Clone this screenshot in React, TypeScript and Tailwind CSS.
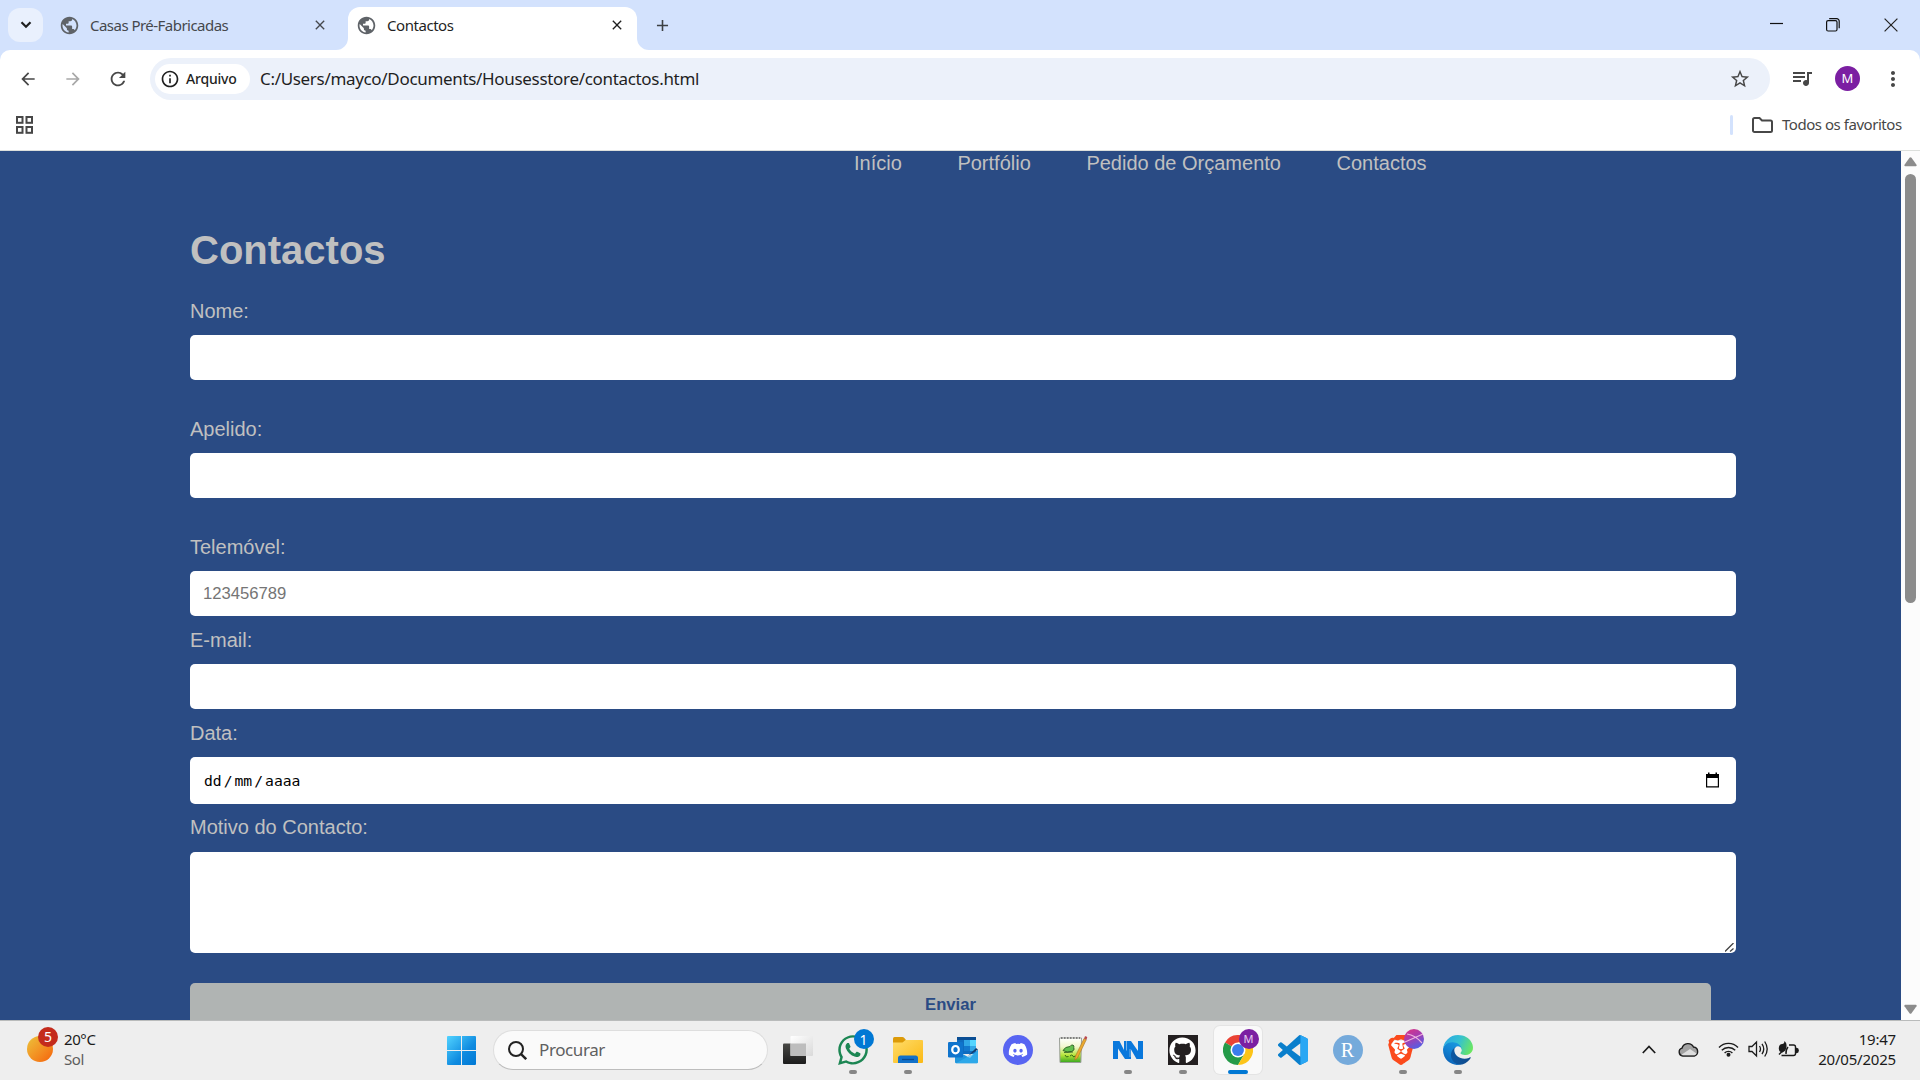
import React from "react";
import {
  MdPublic,
  MdClose,
  MdAdd,
  MdArrowBack,
  MdArrowForward,
  MdRefresh,
  MdOutlineInfo,
  MdStarBorder,
  MdQueueMusic,
  MdMoreVert,
} from "react-icons/md";
import { FaWhatsapp, FaDiscord, FaGithub } from "react-icons/fa";
import { SiBrave } from "react-icons/si";

const UI = "font-['Noto_Sans',sans-serif]";

function TabStrip() {
  return (
    <div className="flex h-[50px] items-start bg-[#d3e2fd]">
      <div className="ml-2 mt-2 flex h-[34px] w-[35px] items-center justify-center rounded-xl bg-[#e9f0fd]">
        <svg width="12" height="8" viewBox="0 0 12 8" fill="none" stroke="#1f1f1f" strokeWidth="2.200">
          <path d="M1.500 1.200 6 5.700l4.500-4.500" />
        </svg>
      </div>
      <div className="ml-[16px] flex h-[50px] w-[289px] items-center text-[#45484d]">
        <MdPublic className="size-[21px] text-[#5f6368]" />
        <span className="ml-[10px] w-[222px] whitespace-nowrap text-[15px] tracking-[-0.53px]">Casas Pré-Fabricadas</span>
        <MdClose className="size-4" />
      </div>
      <div className="relative mt-[7px] flex h-[43px] w-[289px] items-center rounded-t-xl bg-white pb-[7px] text-[#1f1f1f]">
        <svg className="absolute -left-3 bottom-0" width="12" height="12" viewBox="0 0 12 12">
          <path d="M12 0v12H0A12 12 0 0 0 12 0z" fill="#fff" />
        </svg>
        <svg className="absolute -right-3 bottom-0" width="12" height="12" viewBox="0 0 12 12">
          <path d="M0 0v12h12A12 12 0 0 1 0 0z" fill="#fff" />
        </svg>
        <MdPublic className="ml-2 size-[21px] text-[#5f6368]" />
        <span className="ml-[10px] w-[222px] text-[15px] tracking-[-0.45px]">Contactos</span>
        <MdClose className="size-4" />
      </div>
      <MdAdd className="ml-[16px] mt-[16px] size-[19px] text-[#3c4043]" />
      <div className="ml-auto flex h-[50px] items-center pr-[22px]">
        <svg width="13" height="14" viewBox="0 0 13 14"><path d="M0 5.500h13" stroke="#111" strokeWidth="1.200" /></svg>
        <svg className="ml-[43px]" width="14" height="14" viewBox="0 0 14 14" fill="none" stroke="#111" strokeWidth="1.200">
          <rect x=".6" y="2.600" width="10.400" height="10.400" rx="1.500" />
          <path d="M3.200.6h7.300a2.600 2.600 0 0 1 2.700 2.700v7" />
        </svg>
        <svg className="ml-[44px]" width="14" height="14" viewBox="0 0 14 14" stroke="#222" strokeWidth="1.200"><path d="m.6.6 12.800 12.800M13.400.6.6 13.400" /></svg>
      </div>
    </div>
  );
}

function Toolbar() {
  return (
    <div className="bg-[#d3e2fd]">
      <div className="flex h-[50px] items-center rounded-t-[10px] bg-white pt-2 text-[#474747]">
        <MdArrowBack className="mb-px ml-[18px] size-5" />
        <MdArrowForward className="mb-px ml-[25px] size-5 text-[#a8a8a8]" />
        <MdRefresh className="mb-px ml-[24px] size-[22px]" />
        <div className="ml-[21px] flex h-[42px] w-[1620px] items-center rounded-full bg-[#ecf1fa]">
          <div className="ml-[5px] flex h-[30px] w-[95px] items-center rounded-full bg-white text-[#1f1f1f]">
            <MdOutlineInfo className="ml-[5px] size-[20px]" />
            <span className="mb-px ml-[6px] text-[14px] font-medium tracking-[-0.2px]">Arquivo</span>
          </div>
          <span className="ml-[10px] whitespace-nowrap text-[17px] tracking-[-0.32px] text-[#1f1f1f]">
            C:/Users/mayco/Documents/Housesstore/contactos.html
          </span>
          <MdStarBorder className="ml-auto mr-[19px] size-[22px]" />
        </div>
        <MdQueueMusic className="mb-[3px] ml-[20px] size-[24px]" />
        <div className="mb-px ml-[21px] flex size-[25px] items-center justify-center rounded-full bg-[#7b1fa2] text-[13px] text-white">M</div>
        <MdMoreVert className="ml-[21px] size-[24px]" />
      </div>
    </div>
  );
}

function BookmarksBar() {
  return (
    <div className="flex h-[51px] items-center border-b border-[#dcdfdc] bg-white text-[#474747]">
      <svg className="ml-[15px]" width="19" height="18" viewBox="0 0 19 18" fill="none" stroke="#474747" strokeWidth="2">
        <rect x="2" y="1" width="5.500" height="5.800" />
        <rect x="11.500" y="1" width="5.500" height="5.800" />
        <rect x="2" y="11" width="5.500" height="5.800" />
        <rect x="11.500" y="11" width="5.500" height="5.800" />
      </svg>
      <div className="ml-auto h-5 w-[3px] rounded-full bg-[#d3e2fd]" />
      <svg className="ml-[19px]" width="21" height="16" viewBox="0 0 21 16" fill="none" stroke="#474747" strokeWidth="2">
        <path d="M1 2.500C1 1.600 1.600 1 2.500 1h5l2.500 2.500h8.500c.9 0 1.500.6 1.500 1.500v8.500c0 .9-.6 1.500-1.500 1.500h-16C1.600 15 1 14.400 1 13.500z" />
      </svg>
      <span className="mb-[2px] ml-[9px] mr-[18px] w-[120px] whitespace-nowrap text-[15px] tracking-[-0.46px]">Todos os favoritos</span>
    </div>
  );
}

function Field({ label, tall, children }: { label: string; tall?: boolean; children?: React.ReactNode }) {
  return (
    <div>
      <div className="h-6 text-[20px] leading-6">{label}</div>
      <div className={`mt-3 flex w-[1546px] items-center rounded-[5px] bg-white px-[13px] ${tall ? "h-[47px]" : "h-[45px]"}`}>
        {children}
      </div>
    </div>
  );
}

function Page() {
  return (
    <div className="flex h-[869px] overflow-hidden bg-[#2a4b84]">
      <main className="w-[1901px] font-['Liberation_Sans',Arial,sans-serif] text-[#c0c0c0]">
        <nav className="flex h-6 gap-[55.6px] whitespace-nowrap pl-[854px] text-[20px] leading-6">
          <a>Início</a>
          <a>Portfólio</a>
          <a>Pedido de Orçamento</a>
          <a>Contactos</a>
        </nav>
        <div className="ml-[190px] mt-[52px]">
          <h1 className="h-[46px] text-[40px] font-bold leading-[46px]">Contactos</h1>
          <div className="mt-[26px]">
            <Field label="Nome:" />
          </div>
          <div className="mt-[37px]">
            <Field label="Apelido:" />
          </div>
          <div className="mt-[37px] flex flex-col gap-3">
            <Field label="Telemóvel:">
              <span className="text-[16.67px] text-[#757575]">123456789</span>
            </Field>
            <Field label="E-mail:" />
            <Field label="Data:" tall>
              <span className="ml-px mt-[2px] flex gap-[2px] font-['DejaVu_Sans_Mono',monospace] text-[14.7px] text-black">
                <span>dd</span>
                <span>/</span>
                <span>mm</span>
                <span>/</span>
                <span>aaaa</span>
              </span>
              <svg className="mb-px ml-auto mr-[3px]" width="15" height="16" viewBox="0 0 15 16">
                <path d="M1 2h2V.5h1.500V2h6V.5H12V2h2v13.500H1zm1.200 4v8.300h10.600V6z" fill="#000" fillRule="evenodd" />
              </svg>
            </Field>
            <div>
              <div className="-mt-px h-6 text-[20px] leading-6">Motivo do Contacto:</div>
              <div className="mt-[13px] flex h-[101px] w-[1546px] items-end justify-end rounded-[5px] bg-white pb-px pr-[2px]">
                <svg width="9" height="9" viewBox="0 0 9 9" stroke="#444" strokeWidth="1.300">
                  <path d="M0 8.500 8.500 0M5 8.500 8.500 5.500" />
                </svg>
              </div>
            </div>
          </div>
          <div className="mt-[30px] h-[60px] w-[1521px] rounded-[5px] bg-[#b0b4b3] text-center text-[16.67px] font-bold leading-[43px] text-[#2a4b84]">
            Enviar
          </div>
        </div>
      </main>
      <div className="flex w-[19px] flex-col items-center bg-[#fcfcfc] py-[6px]">
        <svg width="13" height="10" viewBox="0 0 13 10"><path d="M5.500.8q1-1.200 2 0l5 7q.6 1.500-.8 1.500H1.300Q0 9.300.5 7.800z" fill="#8b8b8b" /></svg>
        <div className="mt-[7px] h-[429px] w-[11px] rounded-full bg-[#8b8b8b]" />
        <svg className="mt-auto" width="13" height="10" viewBox="0 0 13 10"><path d="M5.500 9.200q1 1.200 2 0l5-7Q13.100.7 11.700.7H1.300Q0 .7.500 2.200z" fill="#8b8b8b" /></svg>
      </div>
    </div>
  );
}

function TaskbarItem({ children, state }: { children: React.ReactNode; state?: "open" | "active" }) {
  return (
    <div
      className={`relative mx-[3.5px] flex size-12 items-center justify-center rounded-md ${
        state === "active" ? "bg-[#f9f9f9] shadow-[0_0_0_1px_#e4e4e4]" : ""
      }`}
    >
      <div className="relative flex size-[30px] items-center justify-center">{children}</div>
      {state === "open" && <div className="absolute bottom-0 h-1 w-2 rounded-full bg-[#868686]" />}
      {state === "active" && <div className="absolute bottom-0 h-1 w-5 rounded-full bg-[#0078d4]" />}
    </div>
  );
}

function Explorer() {
  return (
    <svg width="30" height="30" viewBox="0 0 30 30">
      <defs>
        <linearGradient id="fo" x1="0" y1="0" x2="1" y2="1"><stop stopColor="#ffdc6a" /><stop offset="1" stopColor="#fbb914" /></linearGradient>
      </defs>
      <path d="M0 3.500Q0 2 1.500 2h7.800q1.200 0 2 .9L13 5v5H0z" fill="#dc9a08" />
      <path d="M0 7.500h9.500L12.600 5H29q1 0 1 1v21q0 1-1 1H1q-1 0-1-1z" fill="url(#fo)" />
      <path d="M5 28v-5q0-2.500 2.500-2.500h15Q25 20.500 25 23v5z" fill="#1271c9" />
      <path d="M9 24.500h12" stroke="#0a4a91" strokeWidth="1.300" />
    </svg>
  );
}

function Outlook() {
  return (
    <svg width="30" height="30" viewBox="0 0 30 30">
      <rect x="9" y="2" width="19" height="17" rx="1" fill="#0f6cbf" />
      <rect x="16" y="5" width="6" height="6" fill="#31a7e7" />
      <rect x="22" y="5" width="6" height="6" fill="#54d5ff" />
      <rect x="16" y="11" width="6" height="5" fill="#1379ce" />
      <rect x="22" y="11" width="6" height="5" fill="#31a7e7" />
      <path d="M9 2h19v3H9z" fill="#0a4e94" />
      <path d="M28 13l2 1.500L20 21z" fill="#123c6b" />
      <path d="M7 15l15 8 8-8.500V27q0 1.300-1.300 1.300H8.300Q7 28.300 7 27z" fill="#2196dc" />
      <path d="M8 28.300 30 16v11q0 1.300-1.300 1.300z" fill="#35b4f1" opacity=".6" />
      <rect x="0" y="7" width="15" height="15.500" rx="1.200" fill="#0f74cd" />
      <ellipse cx="7.500" cy="14.700" rx="3.300" ry="3.700" fill="none" stroke="#fff" strokeWidth="2.200" />
    </svg>
  );
}

function Notepad() {
  return (
    <svg width="30" height="30" viewBox="0 0 30 30">
      <defs>
        <linearGradient id="np" x1="0" y1="0" x2="0" y2="1"><stop stopColor="#fff" /><stop offset=".35" stopColor="#f3f8cf" /><stop offset=".7" stopColor="#b6e53a" /><stop offset="1" stopColor="#35a51f" /></linearGradient>
      </defs>
      <path d="M1.500 3h22l-.6 24.500H2z" fill="url(#np)" stroke="#9a9f98" />
      <path d="M3 3h19" stroke="#666" strokeWidth="1.500" strokeDasharray="1.500 1.500" />
      <path d="M5 15.500q2-4 7-4 1-2 3-1.500 1.500.8.800 2.500 1.500 2.500-2 4-4.500 1.500-8.800-1zM6 17.500l9-.5" fill="#62c04e" stroke="#24521c" strokeWidth=".8" />
      <path d="M12 21q2-2 3 0 .5 2 2 0l2 1M7 20q1 3 3.500 1.500" fill="none" stroke="#285d14" strokeWidth=".9" />
      <path d="M26 3.500 28.300 4.700 19.500 23l-2.600 2 .3-3.300z" fill="#eba92e" stroke="#a5742a" strokeWidth=".6" />
      <path d="M26 3.500 28.300 4.700l1-2.200q-1-1.500-2.300-1.200z" fill="#b94a4e" />
    </svg>
  );
}

function Chrome() {
  return (
    <svg width="30" height="30" viewBox="0 0 48 48">
      <path d="M24 24 3.200 12A24 24 0 0 1 44.800 12H24z" fill="#ea4335" />
      <path d="M24 24 3.200 12A24 24 0 0 0 24 48l10.400-18z" fill="#249a48" />
      <path d="M24 12h20.800A24 24 0 0 1 24 48l10.400-18z" fill="#fcc419" />
      <circle cx="24" cy="24" r="12" fill="#fff" />
      <circle cx="24" cy="24" r="9.500" fill="#3b7ded" />
    </svg>
  );
}

function VSCode() {
  return (
    <svg width="30" height="30" viewBox="0 0 24 24">
      <path d="M23.150 2.587L18.210.21a1.494 1.494 0 0 0-1.705.29l-9.460 8.630-4.120-3.128a.999.999 0 0 0-1.276.057L.327 7.261A1 1 0 0 0 .326 8.740L3.899 12 .326 15.260a1 1 0 0 0 .001 1.479L1.650 17.940a.999.999 0 0 0 1.276.057l4.120-3.128 9.460 8.630a1.492 1.492 0 0 0 1.704.29l4.942-2.377A1.500 1.500 0 0 0 24 20.060V3.939a1.500 1.500 0 0 0-.85-1.352zm-5.146 14.861L10.826 12l7.178-5.448v10.896z" fill="#0a7fcc" />
      <path d="m18 .2 5.150 2.390a1.500 1.500 0 0 1 .85 1.350v16.120a1.500 1.500 0 0 1-.85 1.350L18 23.800z" fill="#2aa7f4" />
    </svg>
  );
}

function Edge() {
  return (
    <svg width="30" height="30" viewBox="0 0 256 256">
      <defs>
        <linearGradient id="e1" x1="0" x2="1"><stop stopColor="#0c59a4" /><stop offset="1" stopColor="#114a8b" /></linearGradient>
        <linearGradient id="e2" x1=".8" y1="0" x2=".3" y2="1"><stop stopColor="#1b9de2" /><stop offset=".5" stopColor="#1283d3" /><stop offset="1" stopColor="#0b60b5" /></linearGradient>
        <linearGradient id="e3" x1="0" y1=".3" x2="1" y2=".6"><stop stopColor="#2ba9e5" /><stop offset=".5" stopColor="#35c1d0" /><stop offset="1" stopColor="#6be760" /></linearGradient>
      </defs>
      <path fill="url(#e1)" d="M231.100 190.500c-3.400 1.800-6.900 3.400-10.500 4.700a101 101 0 0 1-35.900 6.500c-47.300 0-88.500-32.500-88.500-74.300a31.500 31.500 0 0 1 16.400-27.300c-42.800 1.800-53.800 46.400-53.800 72.500 0 73.900 68.100 81.400 82.800 81.400 7.900 0 19.800-2.300 27-4.600l1.300-.4a128.300 128.300 0 0 0 66.600-52.800 4 4 0 0 0-5.400-5.700z" />
      <path fill="url(#e2)" d="M105.700 241.400a79.200 79.200 0 0 1-22.700-21.300 80.700 80.700 0 0 1 29.500-120c3.200-1.500 8.500-4.100 15.600-4a32.400 32.400 0 0 1 25.700 13 31.900 31.900 0 0 1 6.300 18.700c0-.2 24.500-79.600-80-79.600-43.900 0-80 41.700-80 78.200a130.200 130.200 0 0 0 12.100 56 128 128 0 0 0 156.400 67 75.500 75.500 0 0 1-62.800-8z" />
      <path fill="url(#e3)" d="M152.300 148.900c-.9 1-3.400 2.500-3.400 5.600 0 2.600 1.700 5.200 4.800 7.300 14.300 10 41.400 8.600 41.500 8.600a59.600 59.600 0 0 0 30.300-8.300 61.400 61.400 0 0 0 30.400-52.900c.3-22.400-8-37.300-11.300-43.900C223.500 24.400 178 1 128 1A128 128 0 0 0 0 127.400c.5-36.500 36.800-66 80-66 3.500 0 23.500.3 42 10a72.600 72.600 0 0 1 30.900 29.300c6.100 10.600 7.200 24.100 7.200 29.500s-2.700 13.300-7.800 18.700z" />
    </svg>
  );
}

function Taskbar() {
  return (
    <footer className="flex h-[60px] items-center border-t border-[#b9bbbb] bg-[#eeeeee]">
      <div className="flex w-[447px] items-center">
        <div className="relative mb-[3px] ml-[27px] h-[26px] w-[26px] rounded-full bg-linear-to-br from-[#eac23a] to-[#f45f06]">
          <div className="absolute -top-[9px] left-[11px] flex size-5 items-center justify-center rounded-full bg-[#c42b1c] text-[14px] leading-none text-white">5</div>
        </div>
        <div className="mb-[4px] ml-[11px] text-[15px] leading-5 tracking-[-0.4px] text-[#1b1b1b]">
          <div>20°C</div>
          <div className="text-[#5d5d5d]">Sol</div>
        </div>
      </div>
      <svg width="29" height="29" viewBox="0 0 29 29">
        <defs><linearGradient id="wn" x1="0" y1="0" x2="1" y2="1"><stop stopColor="#52d3ff" /><stop offset=".6" stopColor="#0f8be0" /><stop offset="1" stopColor="#0078d4" /></linearGradient></defs>
        <path d="M1 0h13v14H0V1q0-1 1-1zm14 0h13q1 0 1 1v13H15zM0 15h14v14H1q-1 0-1-1zm15 0h14v13q0 1-1 1H15z" fill="url(#wn)" />
      </svg>
      <div className="mb-px ml-[17px] flex h-10 w-[275px] items-center rounded-full border border-[#dedede] border-b-[#bdbdbd] bg-[#fafafa]">
        <svg className="ml-[14px]" width="19" height="19" viewBox="0 0 19 19" fill="none" stroke="#222" strokeWidth="2">
          <circle cx="8" cy="8" r="7" />
          <path d="m12.800 12.800 5.400 5.400" strokeWidth="2.400" />
        </svg>
        <span className="ml-[12px] text-[17px] tracking-[-0.4px] text-[#5f6060]">Procurar</span>
      </div>
      <div className="mb-px ml-[2px] flex">
        <TaskbarItem>
          <svg width="30" height="30" viewBox="0 0 30 30">
            <defs>
              <linearGradient id="tv" x1="0" y1="0" x2="0" y2="1"><stop stopColor="#484845" /><stop offset="1" stopColor="#1c1c1c" /></linearGradient>
              <linearGradient id="tw" x1="0" y1="0" x2="1" y2="1"><stop stopColor="#fff" /><stop offset="1" stopColor="#d9d9d9" /></linearGradient>
            </defs>
            <rect x="0" y="8.500" width="23" height="20.500" rx="1" fill="url(#tv)" />
            <rect x="7.500" y="1" width="22.500" height="20" rx="1" fill="url(#tw)" />
            <path d="M7.500 8.500H23V21H7.500z" fill="#bdbdbd" />
          </svg>
        </TaskbarItem>
        <TaskbarItem state="open">
          <FaWhatsapp className="size-[34px] shrink-0 text-[#1c8653]" />
          <div className="absolute -top-[6px] left-4 flex size-5 items-center justify-center rounded-full bg-[#0078d4] text-[14px] text-white">1</div>
        </TaskbarItem>
        <TaskbarItem state="open"><Explorer /></TaskbarItem>
        <TaskbarItem><Outlook /></TaskbarItem>
        <TaskbarItem>
          <div className="flex size-[30px] items-center justify-center rounded-full bg-[#5865f2]"><FaDiscord className="size-[20px] text-white" /></div>
        </TaskbarItem>
        <TaskbarItem><Notepad /></TaskbarItem>
        <TaskbarItem state="open">
          <svg width="30" height="30" viewBox="0 0 30 30" fill="#0a78dc">
            <path d="M0 24V6h6.500l4.500 9V6h7l7 10V6h5v18h-6.500L18 14.500V24h-6L5 13.500V24z" />
            <path d="M13.500 6v9.500M17 14v8" stroke="#eee" strokeWidth=".5" />
          </svg>
        </TaskbarItem>
        <TaskbarItem state="open">
          <div className="flex size-[30px] items-center justify-center bg-[#231f20]"><FaGithub className="size-[27px] text-white" /></div>
        </TaskbarItem>
        <TaskbarItem state="active">
          <Chrome />
          <div className="absolute -top-[6px] left-4 flex size-5 items-center justify-center rounded-full bg-[#7b1fa2] text-[11px] text-[#e6cdf0]">M</div>
        </TaskbarItem>
        <TaskbarItem><VSCode /></TaskbarItem>
        <TaskbarItem>
          <div className="flex size-[30px] items-center justify-center rounded-full bg-[#75aadb] font-['Liberation_Serif',serif] text-[20px] leading-none text-white">R</div>
        </TaskbarItem>
        <TaskbarItem state="open">
          <svg className="absolute" width="30" height="30" viewBox="0 0 30 30"><path d="M6 6h13l3 5-2 11-7.500 5L5 22 3 11z" fill="#fff" /></svg>
          <SiBrave className="relative -left-[2px] size-[30px] shrink-0 text-[#fb4a1c]" />
          <svg className="absolute -top-[6px] left-4" width="20" height="20" viewBox="0 0 20 20">
            <defs><linearGradient id="bp" x1="0" y1="0" x2=".5" y2="1"><stop stopColor="#e0337f" /><stop offset=".5" stopColor="#a93caf" /><stop offset="1" stopColor="#5a5be0" /></linearGradient></defs>
            <circle cx="10" cy="10" r="10" fill="url(#bp)" />
            <path d="M1 13 19 5M3 5q8 1 15 9" stroke="#eeb5df" strokeWidth="1.200" fill="none" />
          </svg>
        </TaskbarItem>
        <TaskbarItem state="open"><Edge /></TaskbarItem>
      </div>
      <div className="mb-[3px] ml-auto flex items-center pr-6 text-[#1b1b1b]">
        <svg width="14" height="9" viewBox="0 0 14 9" fill="none" stroke="#1b1b1b" strokeWidth="1.700"><path d="m.8 8 6.200-6.500L13.200 8" /></svg>
        <svg className="ml-[22px]" width="21" height="15" viewBox="0 0 21 15">
          <path d="M4.800 14A4 4 0 0 1 4 6.200 6.200 6.200 0 0 1 15.500 5a4.600 4.600 0 0 1 .8 9z" fill="#a2a2a2" stroke="#1b1b1b" strokeWidth="1.400" />
          <path d="m3 13 9-6 6.500 4.500-1.500 1.800H5z" fill="#dedede" />
        </svg>
        <svg className="ml-[19px]" width="21" height="16" viewBox="0 0 21 16" fill="none" stroke="#1b1b1b" strokeWidth="1.400">
          <path d="M1 6.500a13 13 0 0 1 19 0M3.800 9.300a9.300 9.300 0 0 1 13.400 0M6.600 12a5.500 5.500 0 0 1 7.800 0" />
          <circle cx="10.500" cy="13.700" r="1.300" fill="#1b1b1b" />
        </svg>
        <svg className="ml-[9px]" width="21" height="18" viewBox="0 0 21 18" fill="none" stroke="#1b1b1b" strokeWidth="1.300">
          <path d="M1 6.500h3L8.500 2v14L4 11.500H1zM11.500 6q2 3 0 6M14 3.800q3.500 5.200 0 10.400M16.700 1.500q5 7.500 0 15" />
        </svg>
        <svg className="ml-[9px]" width="21" height="18" viewBox="0 0 21 18" fill="none" stroke="#1b1b1b" strokeWidth="1.400">
          <path d="M11 5h4.500q2 0 2 2v6.500q0 2-2 2H3.500M8 14q-.5-4 2-7" />
          <path d="M18.500 8.500v4q1.700-.2 1.700-2t-1.700-2z" fill="#1b1b1b" />
          <path d="M6.500 1Q9 3 8.500 7t-4 5.500Q.5 12 .8 8t3.500-4q2 0 2.200-3z" fill="#1b1b1b" stroke="none" />
          <path d="m1 14.500 3-3" />
        </svg>
        <div className="ml-[19px] w-[78px] whitespace-nowrap text-right text-[15px] leading-5 tracking-[-0.2px]">
          <div>19:47</div>
          <div>20/05/2025</div>
        </div>
      </div>
    </footer>
  );
}

export default function App() {
  return (
    <div className={`h-[1080px] w-[1920px] overflow-hidden ${UI}`}>
      <TabStrip />
      <Toolbar />
      <BookmarksBar />
      <Page />
      <Taskbar />
    </div>
  );
}
